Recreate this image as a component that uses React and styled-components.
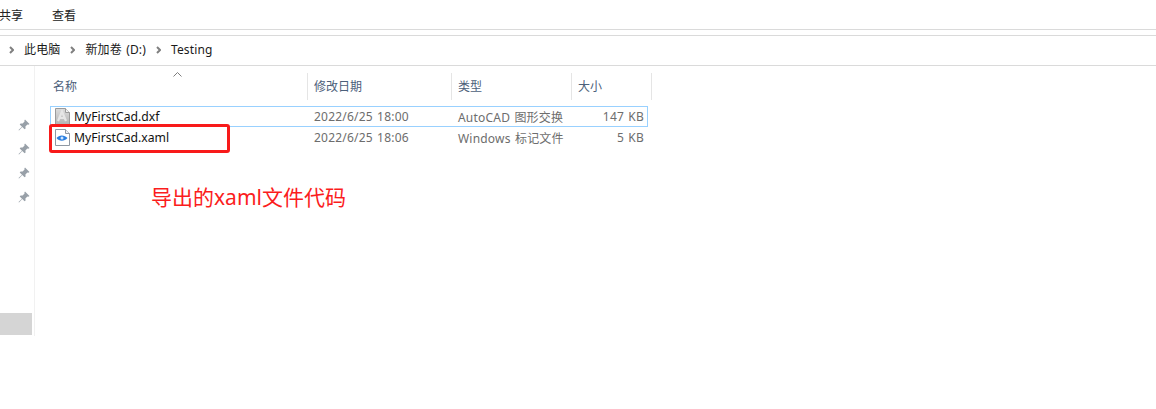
import { createGlobalStyle, styled } from "styled-components";

const GlobalStyle = createGlobalStyle`
	html, body {
		margin: 0;
		padding: 0;
		background: #fff;
	}
	body {
		width: 1156px;
		height: 409px;
		overflow: hidden;
		font-family: "Noto Sans", "Noto Sans CJK SC", sans-serif;
		font-size: 12px;
		color: #1a1a1a;
	}
`;

function Chevron() {
	return (
		<ChevronIcon width="5" height="8" viewBox="0 0 5 8">
			<path d="M1 1l3 3-3 3" fill="none" stroke="#808080" strokeWidth="2" />
		</ChevronIcon>
	);
}

function Pin() {
	return (
		<svg width="12" height="12" viewBox="0 0 12 12">
			<path d="M7 .5l4.500 4.500-1.200.7-.9-.3-2 2 .2 2-1 .9-2.300-2.300L1 11.500l-.5-.5 3.500-3.300L1.700 5.400l.9-1 2 .2 2-2-.3-.9z" fill="#98a0a8" />
		</svg>
	);
}

function DxfIcon() {
	return (
		<svg width="15" height="17" viewBox="0 0 15 17">
			<defs>
				<linearGradient id="dxfFill" x1="0" y1="0" x2="0" y2="1">
					<stop offset="0" stopColor="#dcdcdc" />
					<stop offset="1" stopColor="#b4b4b4" />
				</linearGradient>
			</defs>
			<path d="M.5.5h10l4 4v12H.500z" fill="url(#dxfFill)" stroke="#9a9a9a" />
			<path d="M10.500.5v4h4" fill="#f0f0f0" stroke="#9a9a9a" />
			<path d="M3 13L7 3.500 11 13M4.500 10h5" fill="none" stroke="#e6e6e6" strokeWidth="2.200" />
		</svg>
	);
}

function XamlIcon() {
	return (
		<svg width="15" height="17" viewBox="0 0 15 17">
			<path d="M.5.5h10l4 4v12H.500z" fill="#fff" stroke="#8f98a3" />
			<path d="M10.500.5v4h4" fill="#eef1f4" stroke="#8f98a3" />
			<path d="M1.500 9C4 5.500 9.500 5.500 12.500 9 9.500 12.500 4 12.500 1.500 9z" fill="#2a7fe0" />
			<circle cx="7" cy="9" r="1.500" fill="#cfe6ff" />
		</svg>
	);
}

const columns = [
	{ label: "名称", width: 258, pad: 3 },
	{ label: "修改日期", width: 144, pad: 6 },
	{ label: "类型", width: 120, pad: 6 },
	{ label: "大小", width: 80, pad: 6 },
];

const files = [
	{ name: "MyFirstCad.dxf", date: "2022/6/25 18:00", type: "AutoCAD 图形交换", size: "147 KB", icon: <DxfIcon />, selected: true },
	{ name: "MyFirstCad.xaml", date: "2022/6/25 18:06", type: "Windows 标记文件", size: "5 KB", icon: <XamlIcon /> },
];

export default function App() {
	return (
		<>
			<GlobalStyle />
			<Ribbon>
				<MenuItem>共享</MenuItem>
				<MenuItem>查看</MenuItem>
			</Ribbon>
			<AddressBar>
				<Chevron />
				<Crumb>此电脑</Crumb>
				<Chevron />
				<Crumb>新加卷 (D:)</Crumb>
				<Chevron />
				<Crumb>Testing</Crumb>
			</AddressBar>
			<Content>
				<Sidebar>
					<Pins>
						<Pin />
						<Pin />
						<Pin />
						<Pin />
					</Pins>
					<SidebarSelection />
				</Sidebar>
				<FileList>
					<SortArrow width="9" height="5" viewBox="0 0 9 5">
						<path d="M.5 4.500l4-4 4 4" fill="none" stroke="#7d7d7d" />
					</SortArrow>
					<HeaderRow>
						{columns.map((column) => (
							<HeaderCell key={column.label} $width={column.width} $pad={column.pad}>
								{column.label}
							</HeaderCell>
						))}
					</HeaderRow>
					{files.map((file) => (
						<FileRow key={file.name} $selected={file.selected}>
							<NameCell>
								{file.icon}
								{file.name}
							</NameCell>
							<DateCell>{file.date}</DateCell>
							<TypeCell>{file.type}</TypeCell>
							<SizeCell>{file.size}</SizeCell>
						</FileRow>
					))}
					<Highlight />
					<Annotation>导出的xaml文件代码</Annotation>
				</FileList>
			</Content>
		</>
	);
}

const Ribbon = styled.div`
	display: flex;
	gap: 29px;
	height: 26px;
	margin-left: -1px;
	align-items: center;
	padding-top: 3px;
	border-bottom: 1px solid #dadada;
`;

const MenuItem = styled.span`
	font-size: 12px;
	line-height: 16px;
	color: #222;
`;

const AddressBar = styled.div`
	display: flex;
	align-items: center;
	height: 27px;
	margin-top: 5px;
	padding-left: 9px;
	padding-bottom: 2px;
	border-top: 1px solid #dadada;
	border-bottom: 1px solid #dadada;
`;

const ChevronIcon = styled.svg`
	flex: none;
`;

const Crumb = styled.span`
	margin: 0 10px;
	font-size: 12px;
	line-height: 16px;
	letter-spacing: 0.15px;
	word-spacing: 1px;
	color: #1a1a1a;
`;

const Content = styled.div`
	display: flex;
`;

const Sidebar = styled.div`
	position: relative;
	width: 35px;
	height: 270px;
	border-right: 1px solid #f1f1f1;
	box-sizing: border-box;
`;

const Pins = styled.div`
	display: flex;
	flex-direction: column;
	align-items: center;
	gap: 12px;
	padding-top: 53px;
	width: 48px;
`;

const SidebarSelection = styled.div`
	position: absolute;
	left: 0;
	top: 247px;
	width: 32px;
	height: 22px;
	background: #d5d5d5;
`;

const FileList = styled.div`
	position: relative;
	flex: 1;
	padding-left: 15px;
`;

const SortArrow = styled.svg`
	position: absolute;
	left: 138px;
	top: 6px;
`;

const HeaderRow = styled.div`
	display: flex;
	height: 27px;
	margin-top: 7px;
	margin-bottom: 6px;
`;

const HeaderCell = styled.div`
	width: ${(props) => props.$width}px;
	padding-left: ${(props) => props.$pad}px;
	box-sizing: border-box;
	border-right: 1px solid #e5e5e5;
	font-size: 12px;
	line-height: 27px;
	color: #4c607a;
`;

const FileRow = styled.div`
	display: flex;
	align-items: center;
	width: 598px;
	height: 21px;
	box-sizing: border-box;
	border: 1px solid ${(props) => (props.$selected ? "#99d1ff" : "transparent")};
	font-size: 12px;
	letter-spacing: 0.2px;
	word-spacing: 1px;
`;

const NameCell = styled.div`
	display: flex;
	align-items: center;
	gap: 4px;
	width: 263px;
	padding-left: 4px;
	box-sizing: border-box;
	font-size: 12.2px;
	letter-spacing: 0;
	color: #111;
`;

const DateCell = styled.div`
	width: 144px;
	color: #6d6d6d;
`;

const TypeCell = styled.div`
	width: 120px;
	white-space: nowrap;
	color: #6d6d6d;
`;

const SizeCell = styled.div`
	flex: 1;
	text-align: right;
	padding-right: 3px;
	color: #6d6d6d;
`;

const Highlight = styled.div`
	position: absolute;
	left: 14px;
	top: 58px;
	width: 181px;
	height: 29px;
	box-sizing: border-box;
	border: 3px solid #f81a1a;
	border-radius: 3px;
`;

const Annotation = styled.div`
	position: absolute;
	left: 116px;
	top: 118px;
	font-size: 21px;
	line-height: 27px;
	white-space: nowrap;
	color: #fb1d1d;
`;
